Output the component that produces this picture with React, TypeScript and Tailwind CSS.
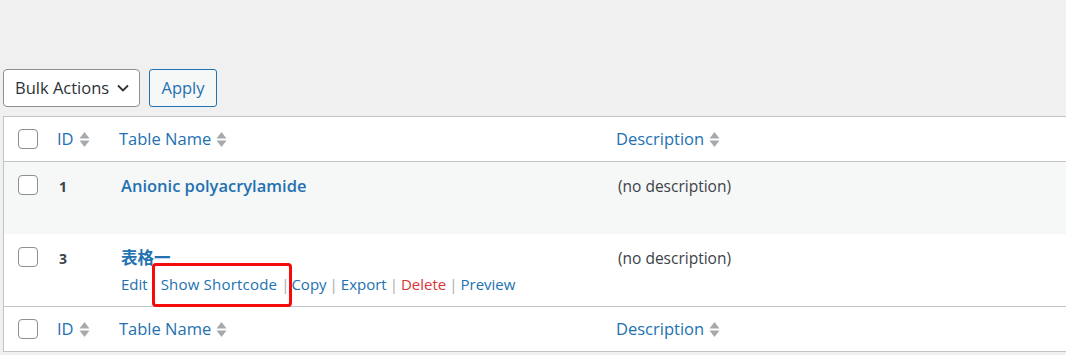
import React from "react";

const font = { fontFamily: '"Open Sans", "Noto Sans CJK SC", sans-serif' };

function SortIcon() {
  return (
    <svg width="11" height="17" viewBox="0 0 11 17" className="ml-[5px] shrink-0">
      <path d="M5.5 1 L10.5 7.5 L0.5 7.5 Z" fill="#a7aaad" />
      <path d="M5.5 16 L10.5 9.5 L0.5 9.5 Z" fill="#a7aaad" />
    </svg>
  );
}

function Check() {
  return <span className="block w-[20px] h-[20px] rounded-[4px] border border-[#8c8f94] bg-white" />;
}

function HeaderRow({ top }: { top?: boolean }) {
  return (
    <div
      className={`flex items-center h-[45px] bg-white border-[#c3c4c7] ${top ? "border-b" : "border-t"}`}
    >
      <div className="w-[53px] pl-[14px] flex items-center">
        <Check />
      </div>
      <div className="w-[62px] flex items-center text-[16.5px] text-[#2271b1]">
        ID
        <SortIcon />
      </div>
      <div className="w-[497px] flex items-center text-[16.5px] text-[#2271b1]">
        Table Name
        <SortIcon />
      </div>
      <div className="flex items-center text-[16.5px] text-[#2271b1]">
        Description
        <SortIcon />
      </div>
    </div>
  );
}

const Sep = () => <span className="text-[#a7aaad] mx-[3px]">|</span>;

export default function App() {
  return (
    <div style={font} className="w-[1066px] h-[355px] bg-[#f0f0f1] overflow-hidden">
      <div className="pt-[69px] pl-[3px] flex gap-[9px]">
        <div className="w-[137px] h-[38px] rounded-[4px] border border-[#8c8f94] bg-white flex items-center justify-between pl-[11px] pr-[10px] text-[16.5px] text-[#2c3338]">
          Bulk Actions
          <svg width="12" height="8" viewBox="0 0 12 8">
            <path d="M1 1.5 L6 6.5 L11 1.5" stroke="#2c3338" strokeWidth="1.8" fill="none" />
          </svg>
        </div>
        <div className="w-[68px] h-[38px] rounded-[3px] border border-[#2271b1] bg-[#f6f7f7] flex items-center justify-center text-[16.5px] text-[#2271b1]">
          Apply
        </div>
      </div>

      <div className="mt-[9px] ml-[3px] border-y border-l border-[#c3c4c7] bg-white">
        <HeaderRow top />

        <div className="flex h-[72px] bg-[#f6f7f7] pt-[13px]">
          <div className="w-[53px] pl-[14px]">
            <Check />
          </div>
          <div className="w-[64px] pl-[2px] pt-[1px] text-[14px] font-bold text-[#3c434a]">1</div>
          <div className="w-[495px] text-[16.5px] font-semibold text-[#2271b1] leading-[22px]">
            Anionic polyacrylamide
          </div>
          <div className="pl-[2px] text-[15.5px] text-[#3c434a] leading-[22px]">(no description)</div>
        </div>

        <div className="flex h-[72px] bg-white pt-[13px]">
          <div className="w-[53px] pl-[14px]">
            <Check />
          </div>
          <div className="w-[64px] pl-[2px] pt-[1px] text-[14px] font-bold text-[#3c434a]">3</div>
          <div className="w-[495px] leading-[22px]">
            <div className="text-[16.5px] font-semibold text-[#2271b1]">表格一</div>
            <div className="mt-[4px] flex items-center text-[15px] text-[#2271b1]">
              <span>Edit</span>
              <span className="relative ml-[13px] flex items-center">
                <span className="tracking-[0.2px]">Show Shortcode</span>
                <span className="text-[#a7aaad] ml-[4px]">|</span>
                <span className="absolute left-[-9px] right-[-3px] top-[-10px] bottom-[-12px] border-[3px] border-[#f40b0b] rounded-[4px]" />
              </span>
              <span className="ml-[2px]">Copy</span>
              <Sep />
              <span>Export</span>
              <Sep />
              <span className="text-[#d63638]">Delete</span>
              <Sep />
              <span>Preview</span>
            </div>
          </div>
          <div className="pl-[2px] text-[15.5px] text-[#3c434a] leading-[22px]">(no description)</div>
        </div>

        <HeaderRow />
      </div>
    </div>
  );
}
